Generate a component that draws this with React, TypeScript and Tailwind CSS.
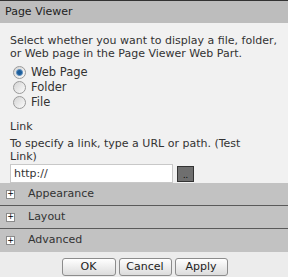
import React, { useState } from 'react';

const font = { fontFamily: '"DejaVu Sans", Verdana, sans-serif' };

function Radio({ checked }: { checked: boolean }) {
  return (
    <span className="relative inline-block w-[13px] h-[13px] rounded-full border border-[#9a9a9a] bg-gradient-to-br from-[#d4d4d4] to-[#fbfbfb] mr-[5px]">
      {checked && <span className="absolute left-[2px] top-[2px] w-[7px] h-[7px] rounded-full bg-[#1c5d9a] border border-[#5c8fc0]" />}
    </span>
  );
}

function Section({ title, last }: { title: string; last?: boolean }) {
  return (
    <div className={`flex items-center h-[23px] bg-[#c2c2c2] ${last ? '' : 'border-b border-[#5a5a5a]'}`}>
      <span className="ml-[6px] w-[9px] h-[9px] bg-white border border-[#8a8a8a] flex items-center justify-center text-[8px] leading-none text-black">+</span>
      <span className="ml-[13px] text-[11px] text-[#333]">{title}</span>
    </div>
  );
}

export default function App() {
  const [choice, setChoice] = useState('web');
  const [url, setUrl] = useState('http://');

  return (
    <div className="w-[288px] h-[277px] bg-[#f1f1f1] border-t border-[#333] flex flex-col overflow-hidden" style={font}>
      <div className="h-[22px] bg-[#bdbdbd] flex items-center pl-[5px] pt-[1px] text-[11px] text-[#222]">Page Viewer</div>
      <div className="flex-1 px-[10px] pt-[11px] text-[11px] leading-[13px] text-[#333]">
        <p>Select whether you want to display a file, folder, or Web page in the Page Viewer Web Part.</p>
        <div className="mt-[6px] ml-[3px] flex flex-col gap-[2px]">
          {[['web', 'Web Page'], ['folder', 'Folder'], ['file', 'File']].map(([k, label]) => (
            <label key={k} className="flex items-center h-[13px] cursor-pointer" onClick={() => setChoice(k)}>
              <Radio checked={choice === k} />
              <span className="text-[11.5px]">{label}</span>
            </label>
          ))}
        </div>
        <div className="mt-[11px]">Link</div>
        <div className="mt-[4px]">To specify a link, type a URL or path. (Test<br />Link)</div>
        <div className="mt-[1px] flex items-center">
          <input value={url} onChange={e => setUrl(e.target.value)} className="w-[163px] h-[19px] bg-white border border-[#c8c8c8] px-[3px] text-[11px] outline-none" style={font} />
          <button className="ml-[4px] w-[17px] h-[16px] bg-[#6f6f6f] border border-[#333] text-[8px] leading-none text-black flex items-end justify-center pb-[1px]">..</button>
        </div>
      </div>
      <div>
        <Section title="Appearance" />
        <Section title="Layout" />
        <Section title="Advanced" last />
      </div>
      <div className="h-[25px] bg-[#ececec] flex items-start justify-center gap-[3px] pt-[6px] pl-[1px]">
        <button className="w-[54px] h-[18px] rounded-[3px] border border-[#8c8c8c] bg-gradient-to-b from-white to-[#dcdcdc] text-[11px] text-[#222]">OK</button>
        <button className="w-[53px] h-[18px] rounded-[3px] border border-[#8c8c8c] bg-gradient-to-b from-white to-[#dcdcdc] text-[11px] text-[#222]">Cancel</button>
        <button className="w-[53px] h-[18px] rounded-[3px] border border-[#8c8c8c] bg-gradient-to-b from-white to-[#dcdcdc] text-[11px] text-[#222]">Apply</button>
      </div>
    </div>
  );
}
